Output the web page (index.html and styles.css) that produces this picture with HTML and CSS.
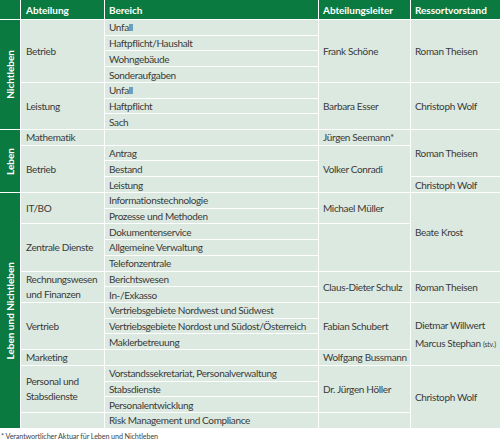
FILE: index.html
```html
<!DOCTYPE html>
<html lang="de">
<head>
<meta charset="utf-8">
<title>Organigramm</title>
<link rel="stylesheet" href="styles.css">
</head>
<body>
<div class="table">
  <div class="h"></div>
  <div class="h c1">Abteilung</div>
  <div class="h">Bereich</div>
  <div class="h">Abteilungsleiter</div>
  <div class="h">Ressortvorstand</div>

  <!-- Nichtleben -->
  <div class="grp s7"><span>Nichtleben</span></div>
  <div class="c c1 s4">Betrieb</div>
  <div class="c">Unfall</div>
  <div class="c s4">Frank Schöne</div>
  <div class="c s4">Roman Theisen</div>
  <div class="c">Haftpflicht/Haushalt</div>
  <div class="c">Wohngebäude</div>
  <div class="c">Sonderaufgaben</div>
  <div class="c c1 s3">Leistung</div>
  <div class="c">Unfall</div>
  <div class="c s3">Barbara Esser</div>
  <div class="c s3">Christoph Wolf</div>
  <div class="c">Haftpflicht</div>
  <div class="c">Sach</div>

  <!-- Leben -->
  <div class="grp s4"><span>Leben</span></div>
  <div class="c c1">Mathematik</div>
  <div class="c"></div>
  <div class="c">Jürgen Seemann*</div>
  <div class="c s3">Roman Theisen</div>
  <div class="c c1 s3">Betrieb</div>
  <div class="c">Antrag</div>
  <div class="c s3">Volker Conradi</div>
  <div class="c">Bestand</div>
  <div class="c">Leistung</div>
  <div class="c">Christoph Wolf</div>

  <!-- Leben und Nichtleben -->
  <div class="grp s15"><span>Leben und Nichtleben</span></div>
  <div class="c c1 s2">IT/BO</div>
  <div class="c">Informationstechnologie</div>
  <div class="c s2">Michael Müller</div>
  <div class="c s5">Beate Krost</div>
  <div class="c">Prozesse und Methoden</div>
  <div class="c c1 s3">Zentrale Dienste</div>
  <div class="c">Dokumentenservice</div>
  <div class="c s3"></div>
  <div class="c">Allgemeine Verwaltung</div>
  <div class="c">Telefonzentrale</div>
  <div class="c c1 s2 wrap">Rechnungswesen und Finanzen</div>
  <div class="c">Berichtswesen</div>
  <div class="c s2">Claus-Dieter Schulz</div>
  <div class="c s2">Roman Theisen</div>
  <div class="c">In-/Exkasso</div>
  <div class="c c1 s3">Vertrieb</div>
  <div class="c">Vertriebsgebiete Nordwest und Südwest</div>
  <div class="c s3">Fabian Schubert</div>
  <div class="c s4 stack"><span>Dietmar Willwert</span><span>Marcus Stephan <small>(stv.)</small></span></div>
  <div class="c">Vertriebsgebiete Nordost und Südost/Österreich</div>
  <div class="c">Maklerbetreuung</div>
  <div class="c c1">Marketing</div>
  <div class="c"></div>
  <div class="c">Wolfgang Bussmann</div>
  <div class="c c1 s3 wrap">Personal und Stabsdienste</div>
  <div class="c">Vorstandssekretariat, Personalverwaltung</div>
  <div class="c s3">Dr. Jürgen Höller</div>
  <div class="c s4">Christoph Wolf</div>
  <div class="c">Stabsdienste</div>
  <div class="c">Personalentwicklung</div>
  <div class="c c1"></div>
  <div class="c">Risk Management und Compliance</div>
  <div class="c"></div>
</div>
<p class="note">* Verantwortlicher Aktuar für Leben und Nichtleben</p>
</body>
</html>
```

FILE: styles.css
```css
html, body {
  margin: 0;
  padding: 0;
  background: #ffffff;
}

body {
  width: 500px;
  font-family: Lato, "Open Sans", "Liberation Sans", sans-serif;
}

.table {
  display: grid;
  grid-template-columns: 20px 83px 213px 91px 89px;
  grid-template-rows: 19px repeat(26, 14.73px);
  gap: 1px;
  background: #ffffff;
}

.h {
  background: #0a7a40;
  color: #ffffff;
  font-weight: 700;
  font-size: 10px;
  letter-spacing: -0.05px;
  display: flex;
  align-items: center;
  padding: 0 4px;
  white-space: nowrap;
}

.c {
  background: #dce9e0;
  color: #3a3a3a;
  font-size: 10px;
  letter-spacing: -0.35px;
  display: flex;
  align-items: center;
  padding: 0 4px;
  white-space: nowrap;
  line-height: 1.2;
}

.c1 {
  padding-left: 5px;
}

.wrap {
  white-space: normal;
  line-height: 15px;
}

.stack {
  flex-direction: column;
  align-items: flex-start;
  justify-content: center;
  gap: 6px;
}

.stack small {
  font-size: 7px;
  letter-spacing: -0.2px;
}

.grp {
  background: #0a7a40;
  color: #ffffff;
  font-weight: 700;
  font-size: 10px;
  display: flex;
  align-items: center;
  justify-content: center;
  white-space: nowrap;
}

.grp span {
  writing-mode: vertical-rl;
  transform: rotate(180deg);
}

.s2 { grid-row: span 2; }
.s3 { grid-row: span 3; }
.s4 { grid-row: span 4; }
.s5 { grid-row: span 5; }
.s7 { grid-row: span 7; }
.s15 { grid-row: span 15; }

.note {
  margin: 4px 0 0 1px;
  font-size: 7.2px;
  letter-spacing: -0.1px;
  color: #444444;
  line-height: 9px;
}
```
